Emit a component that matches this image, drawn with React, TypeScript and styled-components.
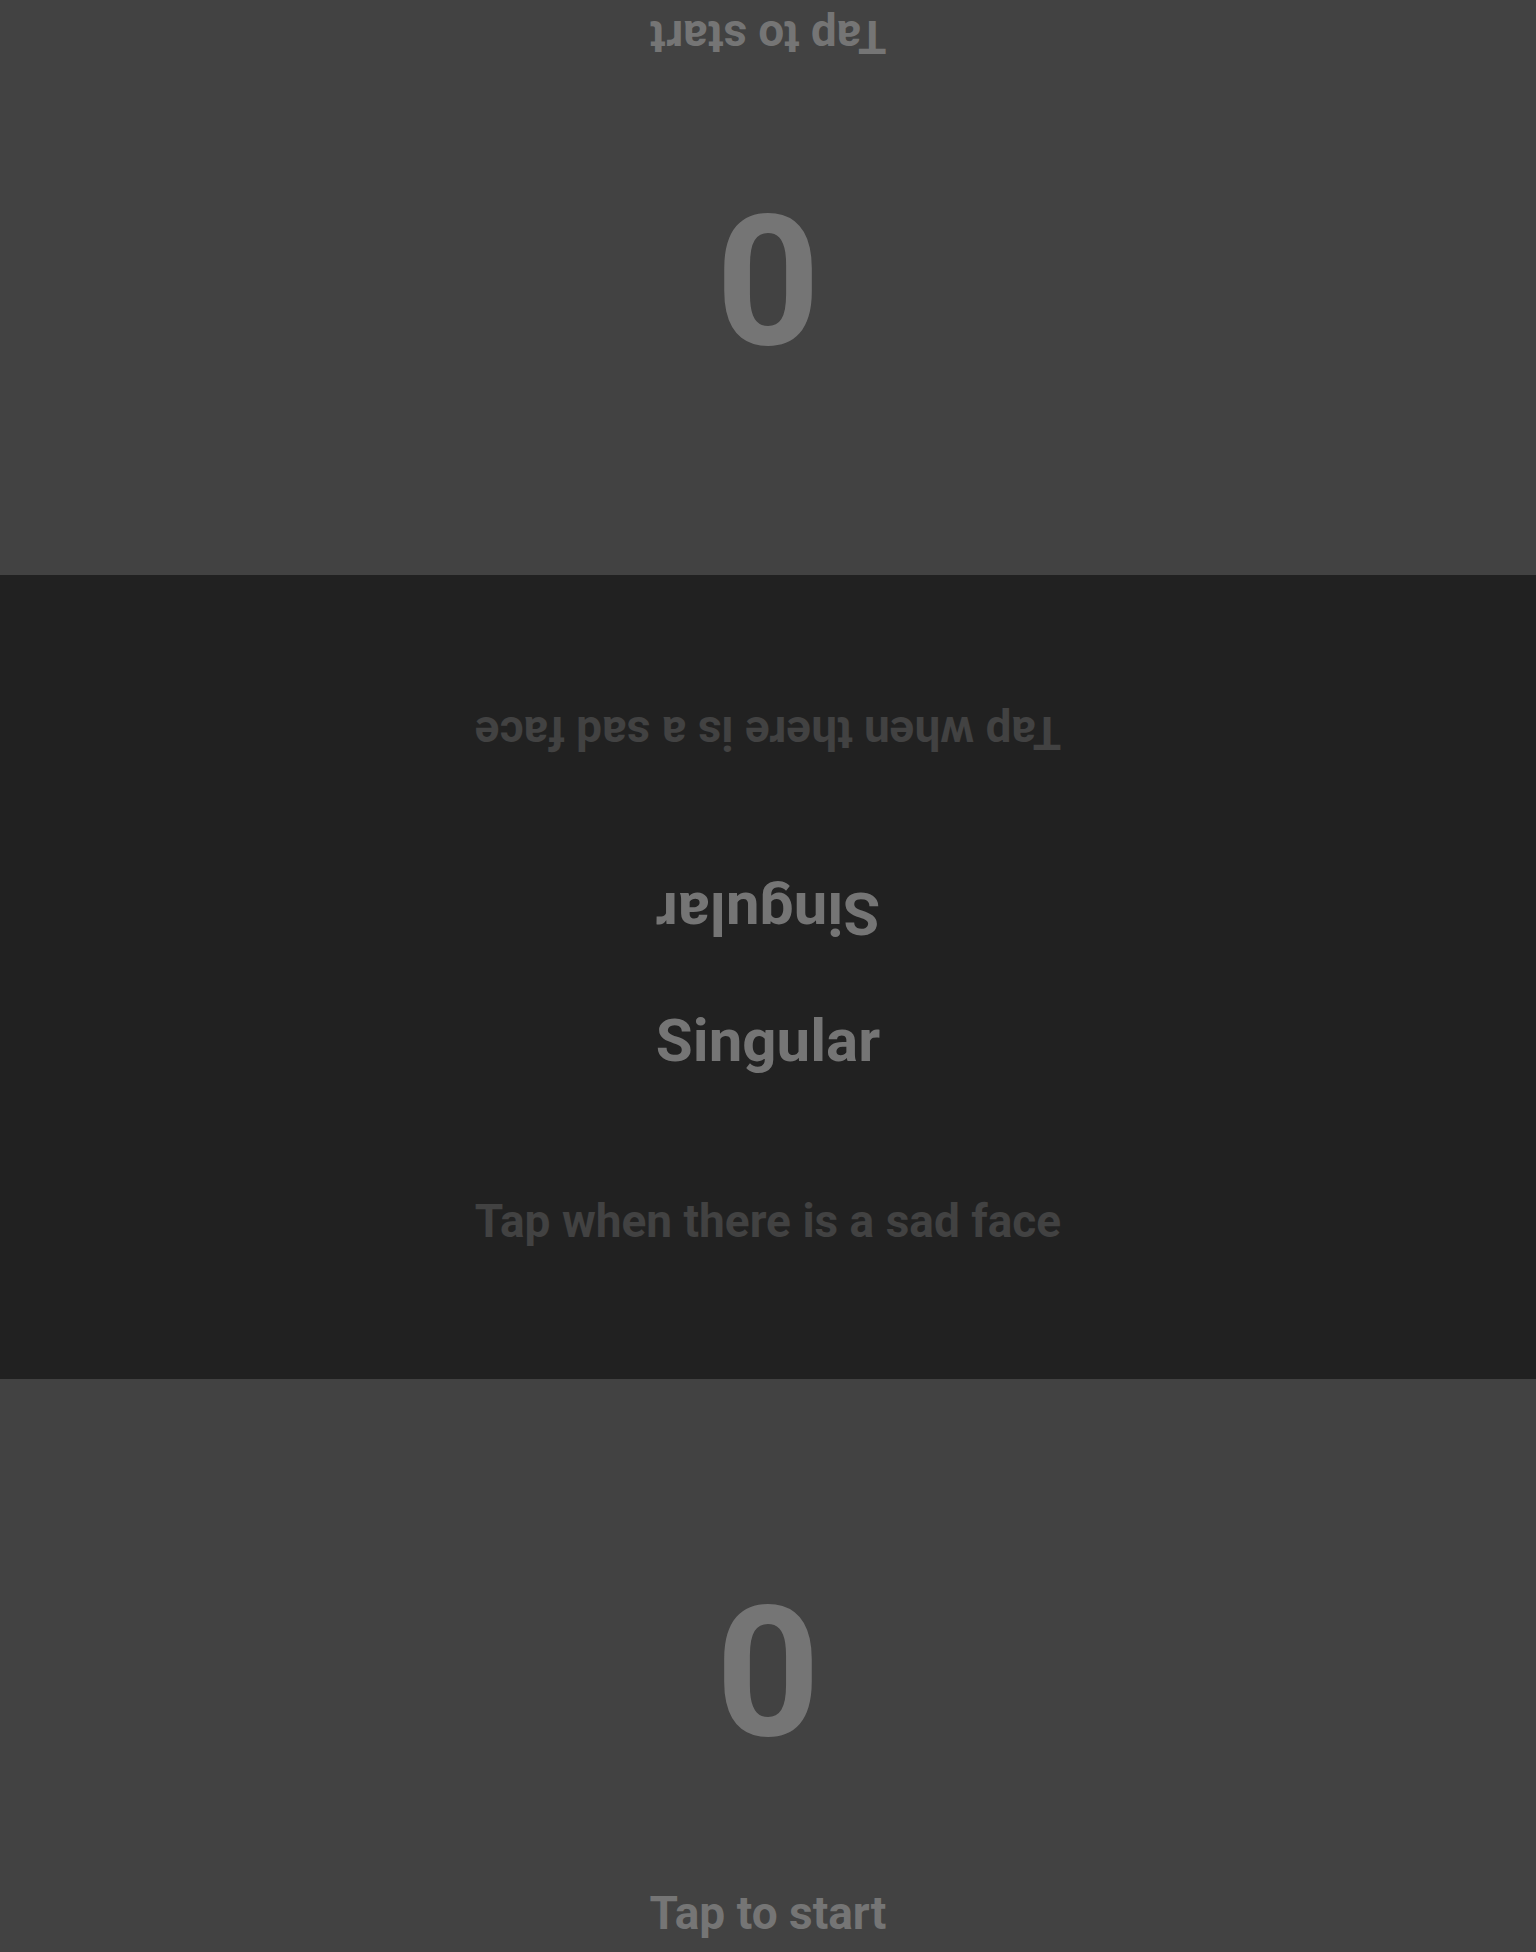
import styled, { createGlobalStyle } from "styled-components";

const GlobalStyle = createGlobalStyle`
  html, body {
    margin: 0;
    padding: 0;
    background: #212121;
  }
  body {
    font-family: Roboto, "Liberation Sans", sans-serif;
    font-weight: 700;
  }
`;

const Screen = styled.main`
  display: flex;
  flex-direction: column;
  width: 100%;
  height: 1952px;
  overflow: hidden;
  user-select: none;
`;

const PlayerPanel = styled.section<{ $flipped?: boolean; $height: number; $edge: number }>`
  display: flex;
  flex-direction: column;
  align-items: center;
  justify-content: flex-end;
  height: ${(p) => p.$height}px;
  flex-shrink: 0;
  padding-bottom: ${(p) => p.$edge}px;
  box-sizing: border-box;
  background-color: #424242;
  color: #757575;
  cursor: pointer;
  transform: ${(p) => (p.$flipped ? "rotate(180deg)" : "none")};
`;

const Score = styled.div`
  font-size: 182px;
  line-height: 1;
  height: 182px;
  margin-bottom: 126px;
`;

const Hint = styled.div`
  font-size: 46px;
  line-height: 1;
`;

const Board = styled.section`
  display: flex;
  flex-direction: column;
  height: 804px;
  flex-shrink: 0;
  background-color: #212121;
`;

const BoardHalf = styled.div<{ $flipped?: boolean }>`
  display: flex;
  flex-direction: column;
  align-items: center;
  flex: 1;
  padding-top: 34px;
  transform: ${(p) => (p.$flipped ? "rotate(180deg)" : "none")};
`;

const Word = styled.div`
  font-size: 60px;
  line-height: 1;
  color: #757575;
  margin-bottom: 127px;
`;

const Instruction = styled.div`
  font-size: 46px;
  line-height: 1;
  color: #424242;
`;

const Player = ({
  flipped,
  height,
  edge,
}: {
  flipped?: boolean;
  height: number;
  edge: number;
}) => (
  <PlayerPanel $flipped={flipped} $height={height} $edge={edge}>
    <Score>0</Score>
    <Hint>Tap to start</Hint>
  </PlayerPanel>
);

const Half = ({ flipped }: { flipped?: boolean }) => (
  <BoardHalf $flipped={flipped}>
    <Word>Singular</Word>
    <Instruction>Tap when there is a sad face</Instruction>
  </BoardHalf>
);

export default function App() {
  return (
    <>
      <GlobalStyle />
      <Screen>
        <Player flipped height={575} edge={14} />
        <Board>
          <Half flipped />
          <Half />
        </Board>
        <Player height={573} edge={16} />
      </Screen>
    </>
  );
}
